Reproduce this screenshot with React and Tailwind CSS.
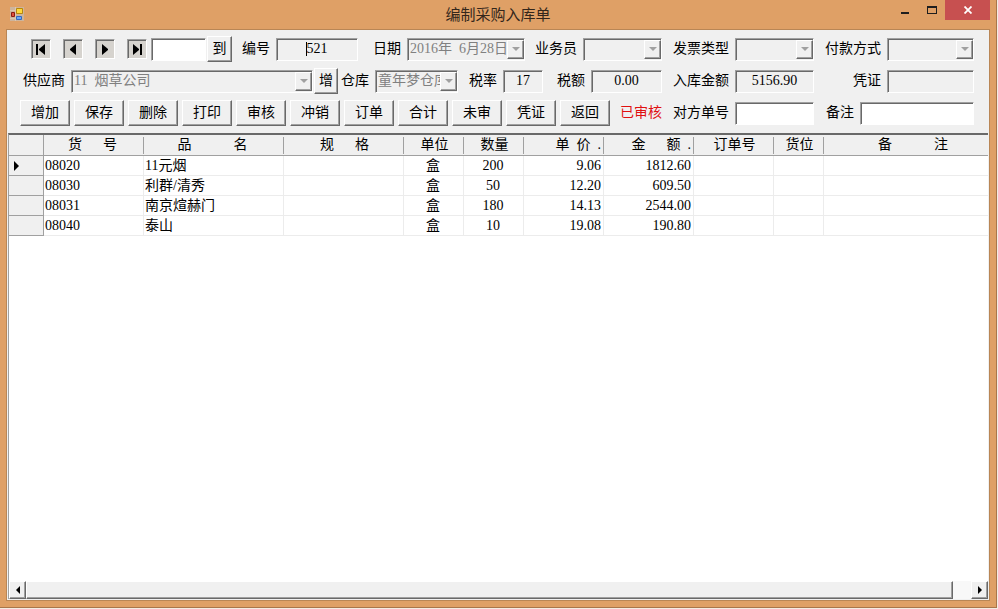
import clsx from 'clsx';

const raised = 'border border-t-white border-l-white border-r-[#696969] border-b-[#696969] shadow-[inset_-1px_-1px_0_#a0a0a0]';
const sunken = 'border border-t-[#a0a0a0] border-l-[#a0a0a0] border-r-white border-b-white shadow-[inset_1px_1px_0_#696969]';

const actions = ['增加', '保存', '删除', '打印', '审核', '冲销', '订单', '合计', '未审', '凭证', '返回'];

const navButtons = [
  { label: '首条', bar: 'M4 4h2v11H4z', points: '13,4 13,15 7,10 7,9' },
  { label: '上一条', points: '12,4 12,15 6,10 6,9' },
  { label: '下一条', points: '6,4 6,15 12,10 12,9' },
  { label: '末条', bar: 'M12 4h2v11h-2z', points: '5,4 5,15 11,10 11,9' },
];

const columns = [
  { title: '货      号', width: 'w-[100px]' },
  { title: '品            名', width: 'w-[140px]' },
  { title: '规      格', width: 'w-[120px]', head: 'pl-1' },
  { title: '单位', width: 'w-[60px]', head: 'pl-1', cell: 'text-center' },
  { title: '数量', width: 'w-[60px]', head: 'pl-1', cell: 'text-center' },
  { title: '单  价  .', width: 'w-[80px]', head: 'text-right', cell: 'text-right' },
  { title: '金      额  .', width: 'w-[90px]', head: 'text-right', cell: 'text-right' },
  { title: '订单号', width: 'w-[80px]', head: 'pl-1' },
  { title: '货位', width: 'w-[50px]', head: 'pl-1' },
  { title: '备            注', width: '', head: 'pl-4' },
];

const rows = [
  ['08020', '11元烟', '', '盒', '200', '9.06', '1812.60', '', '', ''],
  ['08030', '利群/清秀', '', '盒', '50', '12.20', '609.50', '', '', ''],
  ['08031', '南京煊赫门', '', '盒', '180', '14.13', '2544.00', '', '', ''],
  ['08040', '泰山', '', '盒', '10', '19.08', '190.80', '', '', ''],
];

function PushButton({ children, className }) {
  return (
    <button type="button" className={clsx('h-[26px] shrink-0 bg-[#f0f0f0] pb-px', raised, className)}>
      {children}
    </button>
  );
}

function Field({ label, className, children }) {
  return (
    <label className={clsx('flex items-center justify-end gap-1.5 whitespace-nowrap', className)}>
      <span className="shrink-0">{label}</span>
      {children}
    </label>
  );
}

function TextBox({ value, editable, className, label }) {
  return (
    <input
      type="text"
      aria-label={label}
      defaultValue={value}
      readOnly={!editable}
      className={clsx('h-[23px] px-1 text-center outline-none', editable ? 'bg-white' : 'bg-[#f0f0f0]', sunken, className)}
    />
  );
}

function DropDown({ value = '', className }) {
  return (
    <span className={clsx('relative h-[23px]', sunken, className)}>
      <select disabled className="block h-full w-full appearance-none pl-0.5 pr-4 text-[#808080] opacity-100">
        <option>{value}</option>
      </select>
      <span className={clsx('pointer-events-none absolute inset-y-px right-0 flex w-[17px] items-center justify-center bg-[#f0f0f0]', raised)}>
        <svg width="8" height="4" viewBox="0 0 8 4"><path d="M0 0h8L4 4z" fill="#a0a0a0" /></svg>
      </span>
    </span>
  );
}

function TitleBar() {
  return (
    <header className="relative flex h-[29px] items-start justify-center">
      <svg className="absolute left-1 top-[7px]" width="14" height="14" viewBox="0 0 14 14">
        <path d="M0 0h14v14H0z" fill="#cdb49c" />
        <path d="M6.5 1.5h6v5h-6z" fill="#ffd83a" stroke="#b8860b" />
        <path d="M1.5 5.5h3v4h-3z" fill="#e0503c" stroke="#8c1c14" />
        <path d="M6.5 9.5h5v3h-5z" fill="#6aa8f8" stroke="#3468c0" />
        <path d="M5.5 0v14M0 3.5h5M0 11.5h5" stroke="#e4d2c0" strokeWidth=".6" />
      </svg>
      <h1 className="pt-[3px] font-['Noto_Sans_CJK_SC',sans-serif] text-[15px] leading-[22px] text-[#33261b]">编制采购入库单</h1>
      <div className="absolute right-0 top-0 flex h-5">
        <button type="button" aria-label="最小化" className="flex w-[27px] items-center justify-center">
          <svg width="8" height="20"><path d="M0 12h8v2H0z" fill="#1e1e1e" /></svg>
        </button>
        <button type="button" aria-label="最大化" className="flex w-[27px] items-center justify-center">
          <svg width="10" height="20"><path d="M0 6h10v8H0zM1 8v5h8V8z" fill="#1e1e1e" fillRule="evenodd" /></svg>
        </button>
        <button type="button" aria-label="关闭" className="flex w-[45px] items-center justify-center bg-[#c75050]">
          <svg width="8" height="8"><path d="M.5.5l7 7M7.5.5l-7 7" stroke="#fff" strokeWidth="1.8" /></svg>
        </button>
      </div>
    </header>
  );
}

function NavButtons() {
  return (
    <div className="flex gap-3">
      {navButtons.map((b) => (
        <button key={b.label} type="button" aria-label={b.label} className={clsx('size-5 bg-[#d6d3ce]', sunken)}>
          <svg width="18" height="18" viewBox="0 0 18 18">
            {b.bar && <path d={b.bar} />}
            <polygon points={b.points} />
          </svg>
        </button>
      ))}
    </div>
  );
}

function Toolbar() {
  return (
    <div className="flex flex-col gap-1.5 pt-1.5 pr-[15px]">
      <div className="flex h-[26px] items-center pl-6">
        <NavButtons />
        <TextBox editable label="单号" className="ml-1 w-[55px]" />
        <PushButton className="ml-px w-[25px]">到</PushButton>
        <Field label="编号" className="w-[126px]">
          <span className="relative flex">
            <TextBox value="521" className="w-[82px]" />
            {/* insertion point */}
            <span className="absolute left-[30px] top-1 h-[14px] w-px bg-black" />
          </span>
        </Field>
        <Field label="日期" className="w-[167px]"><DropDown value={'2016年\u00a0\u00a06月28日'} className="w-[118px]" /></Field>
        <Field label="业务员" className="w-[137px]"><DropDown className="w-[79px]" /></Field>
        <Field label="发票类型" className="w-[152px]"><DropDown className="w-[79px]" /></Field>
        <Field label="付款方式" className="min-w-0 flex-1 pl-[11px]"><DropDown className="w-0 flex-1" /></Field>
      </div>
      <div className="flex h-[26px] items-center pl-4">
        <Field label="供应商"><DropDown value={'11\u00a0\u00a0烟草公司'} className="w-[242px]" /></Field>
        <PushButton className="ml-px w-6">增</PushButton>
        <Field label="仓库" className="w-[120px]"><DropDown value="童年梦仓库" className="w-[83px]" /></Field>
        <Field label="税率" className="w-[85px]"><TextBox value="17" className="w-10" /></Field>
        <Field label="税额" className="w-[119px]"><TextBox value="0.00" className="w-[71px]" /></Field>
        <Field label="入库金额" className="w-[152px]"><TextBox value="5156.90" className="w-[79px]" /></Field>
        <Field label="凭证" className="min-w-0 flex-1 pl-[39px]"><TextBox className="w-0 flex-1" /></Field>
      </div>
      <div className="flex h-[26px] items-center pl-[13px]">
        <div className="flex gap-1">
          {actions.map((a) => <PushButton key={a} className="w-[50px]">{a}</PushButton>)}
        </div>
        <output className="w-[52px] text-right text-[#e01010]">已审核</output>
        <Field label="对方单号" className="w-[152px]"><TextBox editable className="w-[79px]" /></Field>
        <Field label="备注" className="min-w-0 flex-1 pl-3"><TextBox editable className="w-0 flex-1" /></Field>
      </div>
    </div>
  );
}

function ItemsTable() {
  return (
    <table className="w-full table-fixed border-separate border-spacing-0">
      <thead>
        <tr className="h-[21px] bg-[#f0f0f0]">
          <th className="w-[35px] border-r border-b border-[#a0a0a0] p-0" />
          {columns.map((c) => (
            <th key={c.title} className={clsx('group border-b border-[#a0a0a0] p-0 font-normal', c.width)}>
              <div className={clsx('h-[17px] overflow-hidden whitespace-pre border-r border-[#a0a0a0] pr-0.5 leading-4 group-last:border-r-0', c.head)}>
                {c.title}
              </div>
            </th>
          ))}
        </tr>
      </thead>
      <tbody>
        {rows.map((row, i) => (
          <tr key={row[0]} className="h-5">
            <th className="border-r border-b border-[#a0a0a0] bg-[#f0f0f0] p-0">
              {i === 0 && <svg className="ml-[5px]" width="5" height="10"><path d="M0 0l5 5-5 5z" /></svg>}
            </th>
            {row.map((value, j) => (
              <td key={j} className={clsx('overflow-hidden whitespace-nowrap border-r border-b border-[#ececec] py-0 pl-px pr-0.5 leading-[19px] last:border-r-0', columns[j].cell)}>
                {value}
              </td>
            ))}
          </tr>
        ))}
      </tbody>
    </table>
  );
}

function ScrollBar() {
  return (
    <div className="flex h-[18px] bg-[#f8f8f8]">
      <button type="button" aria-label="向左" className={clsx('flex w-[17px] items-center justify-center bg-[#f0f0f0]', raised)}>
        <svg width="4" height="8"><path d="M4 0v8L0 4z" /></svg>
      </button>
      <div className={clsx('flex-1 bg-[#f0f0f0]', raised)} />
      <div className="w-[18px]" />
      <button type="button" aria-label="向右" className={clsx('flex w-[17px] items-center justify-center bg-[#f0f0f0]', raised)}>
        <svg width="4" height="8"><path d="M0 0v8l4-4z" /></svg>
      </button>
    </div>
  );
}

export default function App() {
  return (
    <div className="flex h-screen bg-[#f4ece4] pr-px pb-px font-['Liberation_Serif','Noto_Sans_CJK_SC',serif] text-[14px] leading-4 text-black">
      <div className="flex min-w-0 flex-1 flex-col border-r border-b border-[#a9764b] bg-[#dfa066] pr-[6px] pb-[6px] pl-[6px]">
        <TitleBar />
        <main className="flex min-h-0 flex-1 flex-col border border-[#b98655] bg-[#f0f0f0]">
          <Toolbar />
          <section className="mx-px mt-[7px] mb-px flex min-h-0 flex-1 flex-col border-t-2 border-l border-t-[#696969] border-l-[#a0a0a0] bg-white">
            <div className="min-h-0 flex-1 overflow-hidden">
              <ItemsTable />
            </div>
            <ScrollBar />
          </section>
        </main>
      </div>
    </div>
  );
}
